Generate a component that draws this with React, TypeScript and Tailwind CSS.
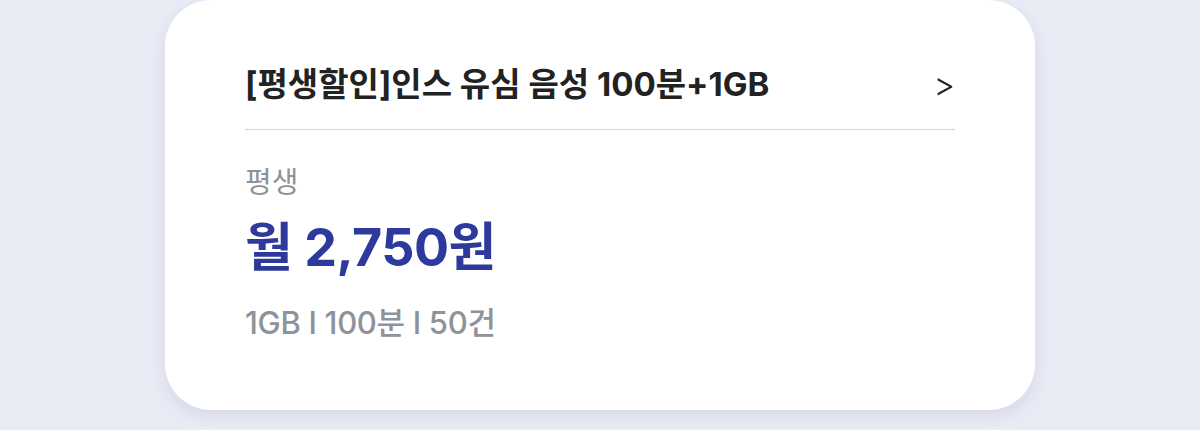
export default function App() {
  return (
    <div
      className="w-[1200px] h-[430px] bg-[#e9ebf5] flex justify-center"
      style={{ fontFamily: 'Inter, "Noto Sans CJK KR", sans-serif' }}
    >
      <div className="w-[870px] h-[410px] bg-white rounded-[46px] shadow-[0_6px_16px_rgba(120,125,170,0.18)] px-20 pt-[64px]">
        <div className="flex items-center justify-between pb-[25px] border-b border-[#d4d4d8]">
          <p className="text-[33px] font-bold text-[#222] leading-[40px]">
            [평생할인]인스 유심 음성 100분+1GB
          </p>
          <span className="text-[33px] font-light text-[#222] leading-[40px]">&gt;</span>
        </div>
        <p className="mt-[35px] text-[29px] text-[#8d929b] leading-[36px]">평생</p>
        <p className="mt-[17px] text-[52px] font-bold text-[#2e3a9b] leading-[60px] tracking-[-0.5px]">
          월 2,750원
        </p>
        <p className="mt-[25px] text-[31px] font-medium text-[#8d929b] leading-[40px] tracking-[-0.3px]">
          1GB I 100분 I 50건
        </p>
      </div>
    </div>
  );
}
